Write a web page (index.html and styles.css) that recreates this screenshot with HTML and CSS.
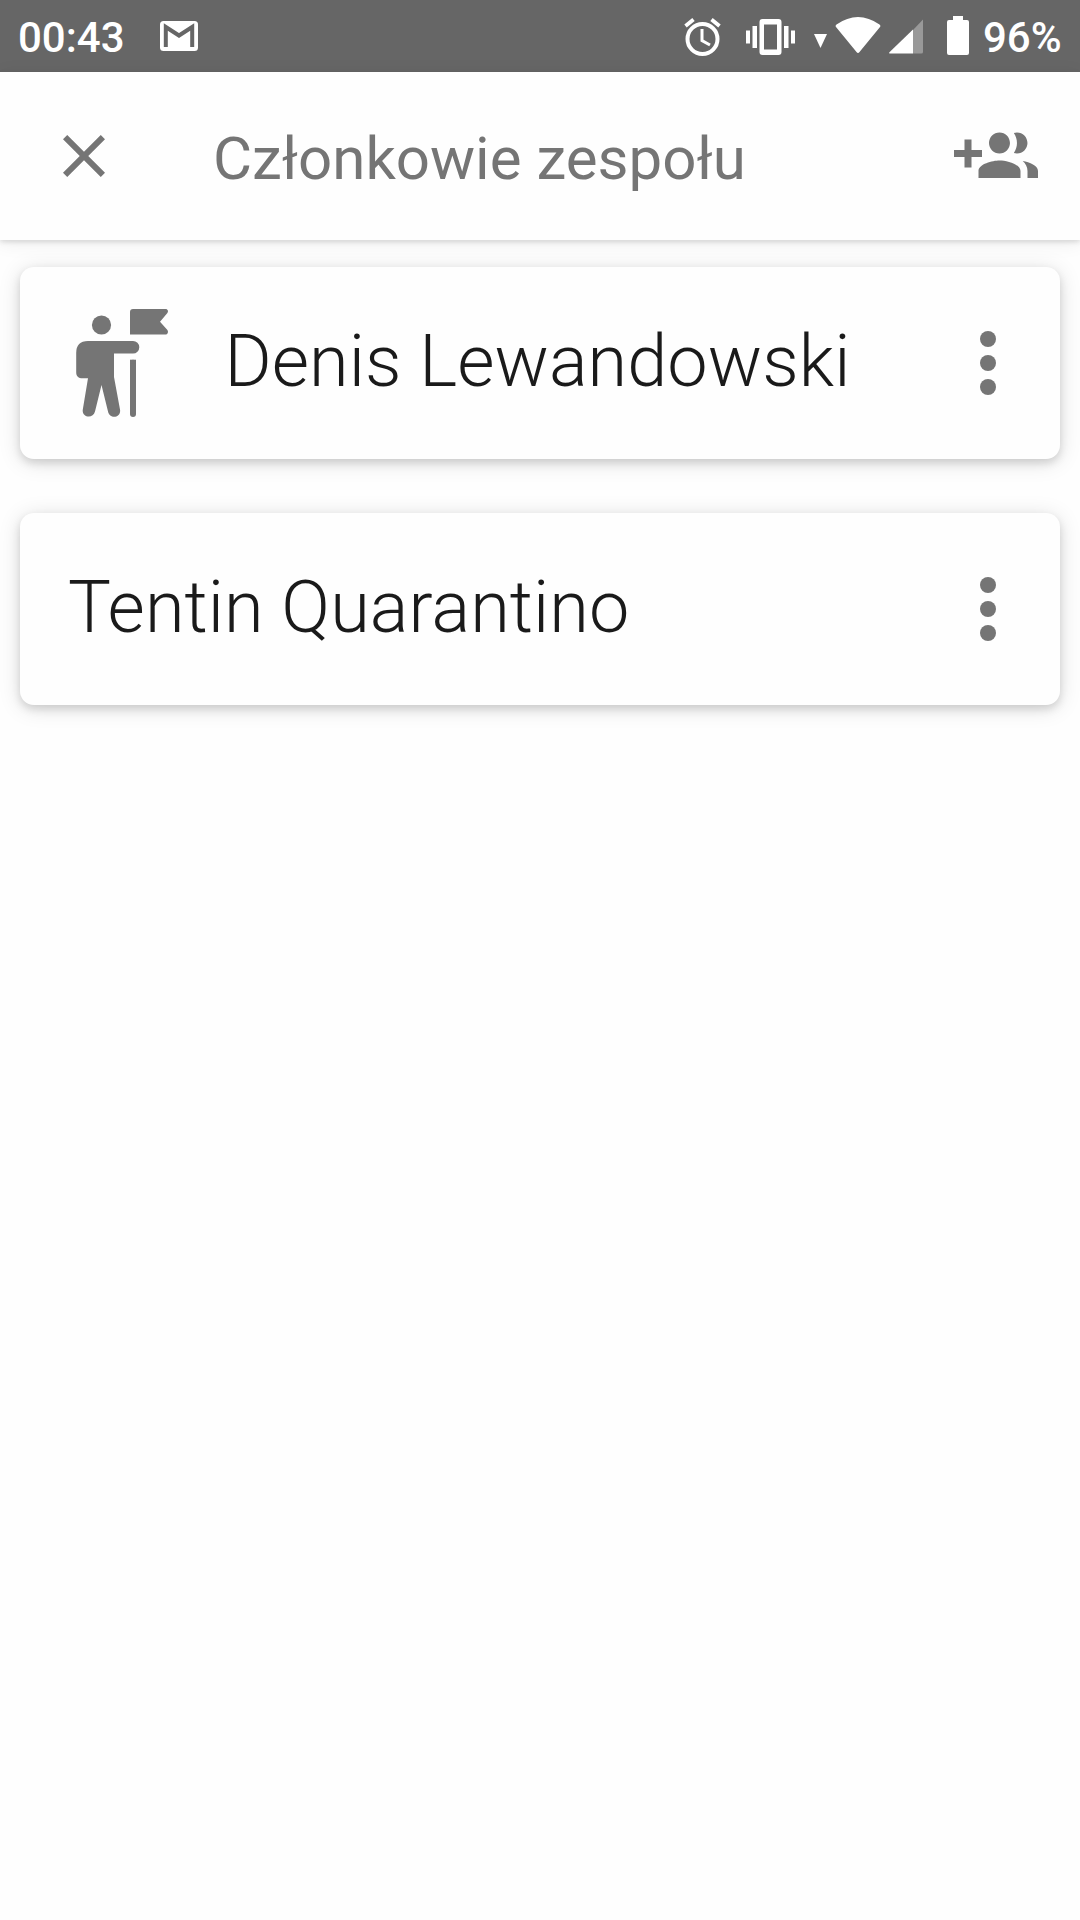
FILE: index.html
```html
<!DOCTYPE html>
<html lang="pl">
<head>
<meta charset="utf-8">
<title>Członkowie zespołu</title>
<link rel="stylesheet" href="styles.css">
</head>
<body>
<div class="status">
  <span class="time">00:43</span>
  <svg class="mail" width="38" height="30" viewBox="0 0 38 30"><rect width="38" height="30" rx="3.5" fill="#fff"/><path d="M5.800 26V6L19 14.500 32.200 6V26" fill="none" stroke="#666" stroke-width="4"/></svg>
  <svg class="alarm" width="38" height="38" viewBox="684 17.500 38 38" fill="none" stroke="#fff"><circle cx="702.500" cy="38.500" r="15" stroke-width="4"/><path d="M685.500 25.500l8-6.500M719.500 25.500l-8-6.500" stroke-width="3.800"/><path d="M702 28.500v11.500l8 4.500" stroke-width="3"/></svg>
  <svg class="vibrate" width="49" height="36" viewBox="746 18.500 49 36" fill="#fff"><path fill-rule="evenodd" d="M762.500 18.500h16a3 3 0 0 1 3 3v30a3 3 0 0 1-3 3h-16a3 3 0 0 1-3-3v-30a3 3 0 0 1 3-3zM764 24v25h13V24z"/><path d="M752.500 25.500h4.500v22h-4.500zM746 30h4v13h-4zM784 25.500h4.500v22H784zM791 30h4v13h-4z"/></svg>
  <svg class="data" width="13" height="14" viewBox="0 0 13 14"><path d="M0 0h13L6.500 14z" fill="#fff"/></svg>
  <svg class="wifi" width="46" height="37" viewBox="0 0 46 37"><path d="M1.500 7.500Q23-7.500 44.500 7.500 46 8.500 45 10L24.500 35Q23 36.800 21.500 35L1 10Q0 8.500 1.500 7.500z" fill="#fff"/></svg>
  <svg class="signal" width="34" height="35" viewBox="0 0 34 35"><path d="M24 11L34 .5V33q0 1.500-1.500 1.500H24z" fill="#999"/><path d="M24 10.500v24H1.500Q-.8 34.500.7 33z" fill="#fff"/></svg>
  <svg class="battery" width="22" height="39" viewBox="0 0 22 39"><path d="M6 0h10v4h4q2 0 2 2v31q0 2-2 2H2q-2 0-2-2V6q0-2 2-2h4z" fill="#fff"/></svg>
  <span class="percent">96%</span>
</div>
<header class="header">
  <svg width="72" height="72" viewBox="0 0 24 24"><path d="M19 6.410L17.590 5 12 10.590 6.410 5 5 6.410 10.590 12 5 17.590 6.410 19 12 13.410 17.590 19 19 17.590 13.410 12z"/></svg>
  <h1 class="title">Członkowie zespołu</h1>
  <svg class="add" width="84" height="84" viewBox="0 0 24 24"><path d="M8 10H5V7H3v3H0v2h3v3h2v-3h3v-2zm10 1c1.660 0 2.990-1.340 2.990-3S19.660 5 18 5c-.32 0-.63.05-.91.14.57.81.9 1.790.9 2.860s-.34 2.040-.9 2.860c.28.09.59.14.91.14zm-5 0c1.660 0 2.990-1.340 2.990-3S14.660 5 13 5c-1.660 0-3 1.340-3 3s1.340 3 3 3zm6.620 2.160c.83.73 1.380 1.660 1.380 2.840v2h3v-2c0-1.540-2.370-2.490-4.380-2.840zM13 13c-2 0-6 1-6 3v2h12v-2c0-2-4-3-6-3z"/></svg>
</header>
<main class="list">
  <div class="card">
    <svg class="leader" width="96" height="112" viewBox="74 307 96 112"><circle cx="101.500" cy="325" r="9.600"/><path d="M133 309h32.500c2.500 0 3.200 2.600 1.700 4.200L160 321.700l7.200 8c1.500 1.800.8 4.800-1.700 4.800H130V312q0-3 3-3z"/><path d="M88 341h45a6.300 6.300 0 0 1 0 12.600h-19V377l6 32.500c1.500 8.500-10.500 10-12 2L101.500 385 95 411.500c-2 8-13.500 6-12.200-2L88 378.300h-5.500c-4 0-6.300-2-6.300-6V353q0-12 11.800-12z"/><rect x="130" y="359.700" width="6" height="57.300" rx="3"/><path d="M130 359.700h6v4h-6z"/></svg>
    <span class="name">Denis Lewandowski</span>
    <svg class="more" width="96" height="96" viewBox="0 0 24 24"><circle cx="12" cy="6" r="2"/><circle cx="12" cy="12" r="2"/><circle cx="12" cy="18" r="2"/></svg>
  </div>
  <div class="card">
    <span class="name">Tentin Quarantino</span>
    <svg class="more" width="96" height="96" viewBox="0 0 24 24"><circle cx="12" cy="6" r="2"/><circle cx="12" cy="12" r="2"/><circle cx="12" cy="18" r="2"/></svg>
  </div>
</main>
</body>
</html>
```
FILE: styles.css
```css
body {
  margin: 0;
  min-height: 1920px;
  background: #fefefe;
  font-family: Roboto, sans-serif;
}
svg {
  display: block;
  flex: none;
}
.status {
  display: flex;
  align-items: flex-start;
  box-sizing: border-box;
  height: 72px;
  background: #666;
  color: #fff;
  font-size: 42px;
  font-weight: 500;
  line-height: 50px;
  white-space: nowrap;
}
.time { margin: 13px 0 0 18px; width: 142px; }
.mail { margin-top: 21px; }
.alarm { margin: 17.5px 0 0 486px; }
.vibrate { margin: 18.5px 0 0 24px; }
.data { margin: 34px 0 0 19px; }
.wifi { margin: 17px 0 0 7.5px; }
.signal { margin: 19px 0 0 8px; }
.battery { margin: 16px 0 0 24px; }
.percent { margin: 13px 0 0 14.5px; }
.header {
  position: relative;
  display: flex;
  align-items: center;
  box-sizing: border-box;
  height: 168px;
  padding: 0 42px 0 48px;
  background: #fefefe;
  box-shadow: 0 2px 5px rgba(0, 0, 0, .13), 0 3px 18px rgba(0, 0, 0, .07);
  fill: #757575;
}
.title {
  margin: 5px 0 0 93px;
  color: #757575;
  font-size: 60px;
  font-weight: 400;
  white-space: nowrap;
}
.add { margin: 1px 0 0 auto; }
.list {
  display: grid;
  gap: 54px;
  padding: 27px 20px;
}
.card {
  display: flex;
  align-items: center;
  box-sizing: border-box;
  height: 192px;
  padding: 0 24px 0 48px;
  border-radius: 14px;
  background: #fefefe;
  box-shadow: 0 4px 8px rgba(0, 0, 0, .13), 0 3px 22px rgba(0, 0, 0, .13);
  fill: #757575;
}
.leader { margin: 0 54.5px 0 6px; }
.name {
  margin-bottom: 2px;
  color: #1a1a1a;
  font-size: 72px;
  font-weight: 300;
  line-height: 84px;
  letter-spacing: .08px;
  white-space: nowrap;
}
.more { margin-left: auto; }
```
